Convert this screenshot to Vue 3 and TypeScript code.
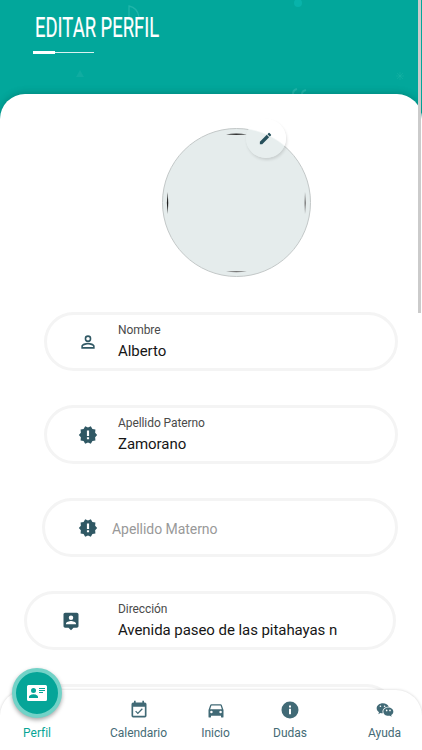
<script setup lang="ts">
interface Field {
  id: string
  label: string
  value?: string
  icon: string
}

interface Tab {
  id: string
  label: string
  icon: string
}

const person =
  'M12 5.9a2.1 2.1 0 1 1 0 4.2 2.1 2.1 0 0 1 0-4.2m0 9c2.97 0 6.1 1.46 6.1 2.1v1.1H5.9V17c0-.64 3.13-2.1 6.1-2.1M12 4a4 4 0 1 0 0 8 4 4 0 0 0 0-8zm0 9c-2.67 0-8 1.34-8 4v3h16v-3c0-2.66-5.33-4-8-4z'
const alertBadge =
  'M23 12l-2.44-2.78.34-3.68-3.61-.82-1.89-3.18L12 3 8.6 1.54 6.71 4.72l-3.61.81.34 3.68L1 12l2.44 2.78-.34 3.69 3.61.82 1.89 3.18L12 21l3.4 1.46 1.89-3.18 3.61-.82-.34-3.68L23 12zm-9.7 5.1h-2.6v-2.3h2.6v2.3zm0-3.9h-2.6V6.7h2.6v6.5z'
const personPin =
  'M19 2H5c-1.1 0-2 .9-2 2v14c0 1.1.9 2 2 2h4l3 3 3-3h4c1.1 0 2-.9 2-2V4c0-1.1-.9-2-2-2zm-7 3.3a2.7 2.7 0 1 1 0 5.4 2.7 2.7 0 0 1 0-5.4zM18 16H6v-.9c0-2 4-3.1 6-3.1s6 1.1 6 3.1v.9z'

const fields: Field[] = [
  { id: 'nombre', label: 'Nombre', value: 'Alberto', icon: person },
  { id: 'paterno', label: 'Apellido Paterno', value: 'Zamorano', icon: alertBadge },
  { id: 'materno', label: 'Apellido Materno', icon: alertBadge },
  { id: 'direccion', label: 'Dirección', value: 'Avenida paseo de las pitahayas n', icon: personPin },
]

const tabs: Tab[] = [
  {
    id: 'perfil',
    label: 'Perfil',
    icon: 'M3.5 3h17A1.5 1.5 0 0 1 22 4.500v13A1.500 1.500 0 0 1 20.500 19h-17A1.500 1.500 0 0 1 2 17.500v-13A1.500 1.500 0 0 1 3.500 3zM14 6v1h6V6zm0 2v1h6V8zm0 2v1h4v-1zM8.500 6a2.500 2.500 0 1 0 0 5 2.500 2.500 0 0 0 0-5zM4 16h9v-1c0-2-3-2.800-4.500-2.800S4 13 4 15z',
  },
  {
    id: 'calendario',
    label: 'Calendario',
    icon: 'M19 19H5V8h14M19 3h-1V1h-2v2H8V1H6v2H5a2 2 0 0 0-2 2v14a2 2 0 0 0 2 2h14a2 2 0 0 0 2-2V5a2 2 0 0 0-2-2m-2.470 8.060L15.470 10l-4.880 4.880-2.120-2.120-1.060 1.060L10.590 17l5.940-5.940z',
  },
  {
    id: 'inicio',
    label: 'Inicio',
    icon: 'M5 11l1.500-4.500h11L19 11M17.500 16a1.500 1.500 0 1 1 0-3 1.500 1.500 0 0 1 0 3m-11 0a1.500 1.500 0 1 1 0-3 1.500 1.500 0 0 1 0 3M18.920 6c-.2-.58-.76-1-1.420-1h-11c-.66 0-1.220.42-1.420 1L3 12v8a1 1 0 0 0 1 1h1a1 1 0 0 0 1-1v-1h12v1a1 1 0 0 0 1 1h1a1 1 0 0 0 1-1v-8l-2.080-6z',
  },
  {
    id: 'dudas',
    label: 'Dudas',
    icon: 'M12 1.800a10.200 10.200 0 1 0 0 20.400 10.200 10.200 0 0 0 0-20.400zM13.200 17h-2.400v-6.500h2.400zm0-8h-2.400V6.700h2.400z',
  },
  {
    id: 'ayuda',
    label: 'Ayuda',
    icon: 'M9.500 4C5.360 4 2 6.690 2 10c0 1.890 1.080 3.560 2.780 4.660L4 17l2.500-1.500c.89.31 1.870.5 2.910.5A5.200 5.200 0 0 1 9 14c0-3.310 3.130-6 7-6h.56C15.540 5.690 12.780 4 9.500 4m-3 2.500a1 1 0 1 1 0 2 1 1 0 0 1 0-2m5 0a1 1 0 1 1 0 2 1 1 0 0 1 0-2M16 9c-3.310 0-6 2.240-6 5s2.690 5 6 5c.67 0 1.310-.08 1.910-.25L20 20l-.62-1.870C20.950 17.220 22 15.710 22 14c0-2.760-2.690-5-6-5m-2 2.500a1 1 0 1 1 0 2 1 1 0 0 1 0-2m4 0a1 1 0 1 1 0 2 1 1 0 0 1 0-2z',
  },
]
</script>

<template>
  <div class="screen">
    <header class="header">
      <svg class="pattern" viewBox="0 0 422 120" fill="none" stroke="#20b5aa">
        <path d="M129 17V6c5 1 9 4 10 11" stroke-width="1.300" />
        <path d="M80 70l4 7h-8z" fill="#10aca1" stroke="none" />
        <circle cx="298" cy="3" r="4" fill="#08b3aa" stroke="none" />
        <path d="M293 94q0-4 4-5M302 94q0-3 4-4" stroke-width="2" />
        <path d="M400 72v8M396 76h8M397 73l6 6M403 73l-6 6" stroke-width=".4" />
      </svg>
      <h1 class="title">EDITAR PERFIL</h1>
      <div class="rule"></div>
    </header>

    <main class="sheet">
      <div class="avatar">
        <svg class="marks" viewBox="0 0 149 149">
          <path d="M64 6.500Q74 4.500 85 6.500Q74 7.300 64 6.500z" fill="#333" />
          <path d="M64 143.500Q74 142.500 85 143.500Q74 145 64 143.500z" fill="#777" />
          <path d="M5.700 64Q4 75 5.700 86Q6.800 75 5.700 64z" fill="#222" />
          <path d="M143 64Q144.800 75 143 86Q142 75 143 64z" fill="#777" />
        </svg>
        <button class="edit" aria-label="Editar foto">
          <svg viewBox="0 0 24 24"><path d="M3 17.250V21h3.750L17.810 9.940l-3.750-3.750L3 17.250zM20.710 7.040a1 1 0 0 0 0-1.410l-2.340-2.340a1 1 0 0 0-1.410 0l-1.830 1.830 3.750 3.750 1.830-1.830z" /></svg>
        </button>
      </div>

      <form class="form">
        <div v-for="f in fields" :key="f.id" class="field" :class="f.id">
          <svg class="icon" viewBox="0 0 24 24"><path fill-rule="evenodd" :d="f.icon" /></svg>
          <div v-if="f.value" class="text">
            <span class="label">{{ f.label }}</span>
            <span class="value">{{ f.value }}</span>
          </div>
          <span v-else class="placeholder">{{ f.label }}</span>
        </div>
        <div class="field next"></div>
      </form>
    </main>

    <div class="scrollbar"></div>

    <nav class="tabs">
      <a v-for="t in tabs" :key="t.id" class="tab" :class="t.id">
        <span class="glyph">
          <svg viewBox="0 0 24 24"><path fill-rule="evenodd" :d="t.icon" /></svg>
        </span>
        <span class="name">{{ t.label }}</span>
      </a>
    </nav>
  </div>
</template>

<style>
body {
  margin: 0;
  background: #fff;
}
</style>

<style scoped>
* {
  box-sizing: border-box;
}
.screen {
  position: relative;
  width: 422px;
  height: 750px;
  overflow: hidden;
  background: #02a79b;
  font-family: Roboto, "Liberation Sans", sans-serif;
}
.header {
  position: relative;
  height: 94px;
  padding: 9px 0 0 35px;
}
.pattern {
  position: absolute;
  left: 0;
  top: 0;
  width: 422px;
  height: 120px;
}
.title {
  position: relative;
  width: max-content;
  margin: 0;
  font-size: 27px;
  line-height: 38px;
  font-weight: 400;
  color: #fff;
  transform: scaleX(0.683);
  transform-origin: 0 50%;
  white-space: nowrap;
  -webkit-text-stroke: 0.2px #fff;
}
.rule {
  position: relative;
  display: flex;
  align-items: center;
  width: 61px;
  height: 3px;
  margin: 4px 0 0 -2px;
}
.rule::before {
  content: "";
  width: 22px;
  height: 3px;
  background: #fff;
}
.rule::after {
  content: "";
  flex: 1;
  height: 1px;
  background: #d9f2f0;
}
.sheet {
  position: relative;
  height: 680px;
  padding-top: 34px;
  border-radius: 25px 25px 0 0;
  background: #fff;
  box-shadow: 0 -1px 7px rgba(0, 60, 55, 0.3);
}
.avatar {
  position: relative;
  width: 149px;
  height: 149px;
  margin-left: 161.5px;
  border: 1px solid #c3c8c8;
  border-radius: 50%;
  background: #e5ecec;
}
.marks {
  display: block;
  width: 149px;
  height: 149px;
  margin: -1px;
}
.edit {
  position: absolute;
  left: 83px;
  top: -10px;
  display: flex;
  align-items: center;
  justify-content: center;
  width: 40px;
  height: 39px;
  padding: 0;
  border: 0;
  border-radius: 50%;
  background: radial-gradient(circle at -9.5px 83.5px, #e7eeee 73.5px, #fff 75px);
  box-shadow: 1px 2px 3px rgba(0, 0, 0, 0.12);
}
.edit svg {
  width: 15px;
  height: 15px;
  fill: #27505c;
}
.form {
  display: flex;
  flex-direction: column;
  gap: 34px;
  margin-top: 35px;
}
.field {
  display: flex;
  align-items: center;
  flex: none;
  width: 354px;
  height: 59px;
  margin-left: 44px;
  padding-left: 31.4px;
  border: 3px solid #f4f4f4;
  border-radius: 30px;
  background: #fff;
}
.field.materno {
  width: 356.5px;
  margin-left: 41.5px;
  padding-left: 33.9px;
}
.field.direccion,
.field.next {
  width: 371.5px;
  margin-left: 24px;
  padding-left: 33.5px;
}
.icon {
  flex: none;
  width: 20px;
  height: 20px;
  fill: #305864;
}
.text {
  display: flex;
  flex-direction: column;
  margin: -1px 0 0 19.6px;
}
.direccion .text {
  margin-left: 37.5px;
}
.label {
  font-size: 12px;
  line-height: 19px;
  letter-spacing: -0.08px;
  color: #4a4a4a;
}
.value {
  font-size: 15px;
  line-height: 22px;
  letter-spacing: -0.06px;
  color: #161616;
  white-space: nowrap;
}
.placeholder {
  margin: 2px 0 0 13.6px;
  font-size: 14px;
  letter-spacing: -0.05px;
  color: #999;
}
.scrollbar {
  position: absolute;
  top: 0;
  right: 1px;
  width: 3px;
  height: 313px;
  background: #cbcbcb;
}
.tabs {
  position: absolute;
  left: 0;
  bottom: 0;
  display: flex;
  width: 422px;
  height: 60px;
  padding-left: 7px;
  border-radius: 26px 26px 0 0;
  background: #fff;
  box-shadow: 0 0 3px rgba(0, 0, 0, 0.18);
}
.tab {
  display: flex;
  flex-direction: column;
  align-items: center;
  flex: none;
  width: 60px;
  padding-top: 9.5px;
  color: #456b75;
}
.glyph,
.glyph svg {
  display: block;
  width: 20px;
  height: 20px;
  fill: #416a76;
}
.name {
  margin-top: 4px;
  font-size: 12px;
  line-height: 18px;
  letter-spacing: -0.04px;
  white-space: nowrap;
}
.calendario {
  margin-left: 41.5px;
}
.inicio {
  margin-left: 17px;
}
.dudas {
  margin-left: 14.5px;
}
.ayuda {
  margin-left: 34.5px;
}
.perfil {
  padding-top: 0;
  color: #07a596;
}
.perfil .glyph {
  display: flex;
  align-items: center;
  justify-content: center;
  flex: none;
  width: 50px;
  height: 50px;
  margin-top: -22px;
  border: 4px solid #72d2c7;
  border-radius: 50%;
  background: #05a598;
  box-shadow: 0 2px 4px rgba(0, 0, 0, 0.35);
}
.perfil .glyph svg {
  width: 24px;
  height: 24px;
  margin-top: 2px;
  fill: #fff;
}
.perfil .name {
  margin-top: 5.5px;
}
</style>
